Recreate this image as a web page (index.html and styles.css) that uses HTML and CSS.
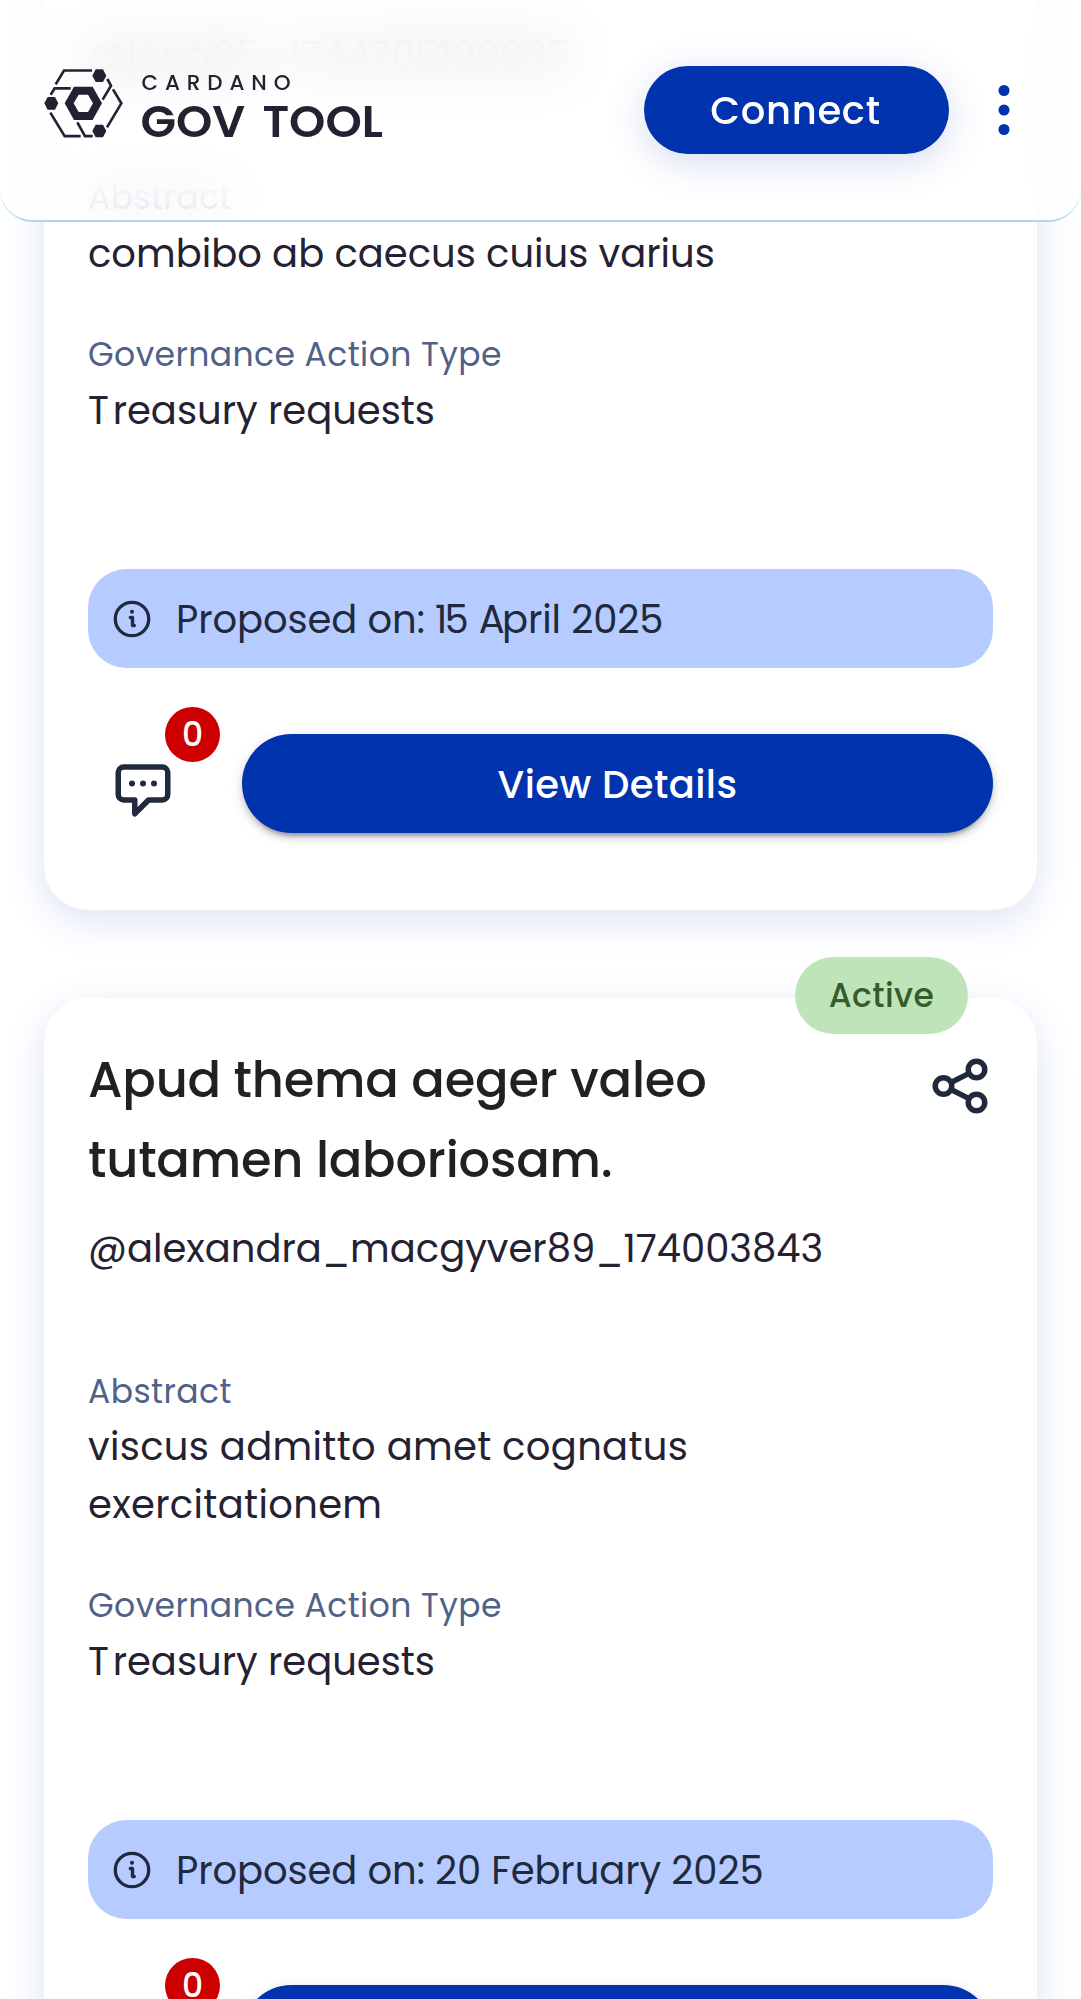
FILE: index.html
```html
<!DOCTYPE html>
<html lang="en">
<head>
<meta charset="utf-8">
<title>Cardano GovTool</title>
<link rel="stylesheet" href="styles.css">
</head>
<body>
<svg class="sprite" aria-hidden="true">
  <symbol id="info" viewBox="0 0 40 40">
    <circle cx="20" cy="20" r="16.7" fill="none" stroke="currentColor" stroke-width="3.3"/>
    <circle cx="20" cy="12.800" r="2" fill="currentColor"/>
    <path d="M18.300 18.500h2.200v8h1.800" fill="none" stroke="currentColor" stroke-width="3.4" stroke-linecap="round" stroke-linejoin="round"/>
  </symbol>
  <symbol id="chat" viewBox="0 0 24 24">
    <path d="M5 4h14a2 2 0 0 1 2 2v8a2 2 0 0 1-2 2h-5l-5 5v-5H5a2 2 0 0 1-2-2V6a2 2 0 0 1 2-2z" fill="none" stroke="currentColor" stroke-width="2" stroke-linejoin="round"/>
    <g fill="currentColor"><circle cx="8" cy="10" r="1.1"/><circle cx="12" cy="10" r="1.1"/><circle cx="16" cy="10" r="1.1"/></g>
  </symbol>
</svg>

<header class="topbar">
  <svg class="logo" viewBox="0 0 330 70" aria-label="Cardano Gov Tool">
    <g transform="scale(.3333) translate(-42 -56)" fill="none" stroke="currentColor" stroke-width="8">
      <path d="M77 102 102 60.500H186M62 133 74 114H122M232 86 243 106 218 148M249 117 274 159 231 231M61 187 104 257.500H152M142 216 165 257.500H188"/>
      <g fill="currentColor" stroke="none">
        <path d="M187 76 197 57H219L229 76 219 95H197zM43 159 53 140H75L85 159 75 178H53zM187 242 197 223H219L229 242 219 261H197z"/>
        <path fill-rule="evenodd" d="M104 159 132 109H188L216 159 188 209H132zM131 159 146 185H174L189 159 174 133H146z"/>
      </g>
    </g>
    <text class="logo-small" x="97.500" y="21.300" textLength="149">CARDANO</text>
    <text class="logo-big" x="96.500" y="67.500" textLength="242.500" lengthAdjust="spacingAndGlyphs">GOV TOOL</text>
  </svg>
  <div class="actions">
    <button class="btn connect">Connect</button>
    <svg class="dots" viewBox="0 0 12 52"><circle cx="6" cy="6.500" r="5.500"/><circle cx="6" cy="26" r="5.500"/><circle cx="6" cy="45.500" r="5.500"/></svg>
  </div>
</header>

<main class="list">
  <article class="card card-scrolled">
    <p class="author author-first">@jeng65_1744705190035</p>
    <p class="label abstract">Abstract</p>
    <p class="value">combibo ab caecus cuius varius</p>
    <p class="label type">Governance Action Type</p>
    <p class="value"><span class="wide">T</span>reasury requests</p>
    <div class="proposed"><svg class="info"><use href="#info"/></svg><span class="date">Proposed on: <span class="tight">1</span>5 <span class="tight">A</span>pril 2025</span></div>
    <div class="footer">
      <div class="comments"><svg class="icon"><use href="#chat"/></svg><span class="count">0</span></div>
      <button class="btn details">View Details</button>
    </div>
  </article>

  <article class="card">
    <span class="chip">Active</span>
    <div class="head">
      <h2 class="title">Apud thema aeger valeo<br>tutamen laboriosam.</h2>
      <svg class="icon share" viewBox="0 0 24 24" fill="none" stroke="currentColor" stroke-width="2"><circle cx="18" cy="6" r="3"/><circle cx="6" cy="12" r="3"/><circle cx="18" cy="18" r="3"/><path d="M8.700 10.700 15.300 7.400M8.700 13.300 15.300 16.600"/></svg>
    </div>
    <p class="author">@alexandra_macgyver89_174003843</p>
    <p class="label abstract">Abstract</p>
    <p class="value loose">viscus admitto amet cognatus<br>exercitationem</p>
    <p class="label type">Governance Action Type</p>
    <p class="value"><span class="wide">T</span>reasury requests</p>
    <div class="proposed"><svg class="info"><use href="#info"/></svg><span class="date">Proposed on: 20 February 2025</span></div>
    <div class="footer">
      <div class="comments"><svg class="icon"><use href="#chat"/></svg><span class="count">0</span></div>
      <button class="btn details">View Details</button>
    </div>
  </article>
</main>
</body>
</html>
```
FILE: styles.css
```css
* { box-sizing: border-box; }
html, body { height: 1999px; overflow: hidden; }
body {
  margin: 0;
  background: #fff;
  color: #242232;
  font-family: Poppins, Inter, sans-serif;
  font-size: 38.5px;
  line-height: 57.75px;
}
p, h2 { margin: 0; white-space: nowrap; }
svg { display: block; flex: none; }
.sprite { position: absolute; width: 0; height: 0; }

.topbar {
  position: fixed;
  inset: 0 0 auto;
  z-index: 2;
  height: 222px;
  padding: 66px 44px 0;
  display: flex;
  justify-content: space-between;
  align-items: flex-start;
  border-bottom: 2px solid #add8e6;
  border-radius: 0 0 33px 33px;
}
.topbar::before {
  content: "";
  position: absolute;
  inset: 0;
  z-index: -1;
  border-radius: 0 0 32px 32px;
  background: rgba(255, 255, 255, .75);
  backdrop-filter: blur(27px);
  opacity: .98;
}
.logo { width: 330px; height: 70px; margin-top: 3px; color: #242232; overflow: visible; }
.logo text { fill: currentColor; }
.logo-small { font-size: 21.5px; font-weight: 500; }
.logo-big { font-size: 45px; font-weight: 600; word-spacing: 6px; }
.actions { display: flex; align-items: center; gap: 49px; padding-right: 27px; }
.dots { width: 12px; height: 52px; fill: #0033ad; }

.btn {
  border: 0;
  padding: 0;
  background: #0033ad;
  color: #fff;
  font: 500 38.5px/58px Poppins, Inter, sans-serif;
  text-align: center;
}
.connect {
  width: 305px;
  height: 88px;
  padding: 1px 2px 0 0;
  border-radius: 44px;
  letter-spacing: .7px;
  box-shadow: 0 8px 38px rgba(0, 51, 173, .17);
}

.list { display: flex; flex-direction: column; gap: 88px; padding: 0 44px; margin-top: -80px; }
.card {
  position: relative;
  padding: 42px 44px 77px;
  border-radius: 44px;
  background: #fff;
  box-shadow: 0 11px 41px #dde3f5;
}
.card-scrolled { padding-top: 107px; }
.chip {
  position: absolute;
  top: -41px;
  right: 69px;
  width: 173px;
  height: 77px;
  border-radius: 38.5px;
  background: #c0e4ba;
  color: #365c2b;
  font-size: 33px;
  font-weight: 500;
  line-height: 77px;
  letter-spacing: .4px;
  text-align: center;
}
.head { display: flex; justify-content: space-between; }
.title {
  font-size: 49.5px;
  font-weight: 500;
  line-height: 80px;
  letter-spacing: -.2px;
  color: #212121;
}
.icon { width: 66px; height: 66px; color: #212a3d; }
.share { margin-top: 13px; }
.author { margin-top: 20px; }
.author-first { margin-top: 0; }
.label { font-size: 33px; line-height: 50px; letter-spacing: .42px; color: #506288; }
.abstract { margin-top: 88.5px; }
.type { margin-top: 47.5px; }
.value { margin-top: 1.5px; }
.wide { letter-spacing: 3.8px; }
.loose { letter-spacing: .33px; }
.proposed {
  display: flex;
  align-items: center;
  gap: 24px;
  height: 99px;
  margin-top: 130px;
  padding-left: 24px;
  border-radius: 38.5px;
  background: #b6cbff;
  color: #212a3d;
  white-space: nowrap;
}
.date { padding-top: 2.5px; letter-spacing: -.08px; }
.tight { letter-spacing: -2.8px; }
.info { width: 40px; height: 40px; }
.footer { display: flex; gap: 44px; margin-top: 66px; height: 99px; }
.comments { position: relative; width: 110px; padding: 22px; }
.count {
  position: absolute;
  top: -27px;
  right: -22px;
  width: 55px;
  height: 55px;
  border-radius: 50%;
  background: #c00;
  color: #fff;
  font-size: 33px;
  font-weight: 500;
  line-height: 55px;
  text-align: center;
}
.details {
  flex: 1;
  padding-top: 3px;
  border-radius: 49.5px;
  letter-spacing: .42px;
  box-shadow: 0 8px 3px -5px rgba(0, 0, 0, .2), 0 5px 6px rgba(0, 0, 0, .14), 0 3px 14px rgba(0, 0, 0, .12);
}
```
